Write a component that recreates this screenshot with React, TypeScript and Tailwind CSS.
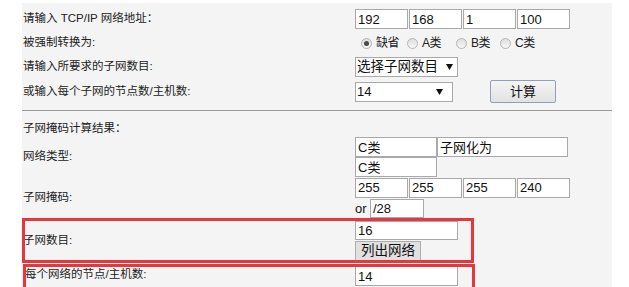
import type { ReactNode } from "react";

function Field({ value, w, h = "h-[20px]" }: { value: string; w: string; h?: string }) {
  return (
    <div
      className={`${w} ${h} shrink-0 border border-[#a9a9a9] bg-white px-[2px] text-[13px] leading-none text-[#111] flex items-center`}
    >
      {value}
    </div>
  );
}

function Arrow() {
  return (
    <svg width="7" height="6" viewBox="0 0 7 6" className="shrink-0">
      <path d="M0 0H7L3.5 6Z" fill="#111" />
    </svg>
  );
}

function Radio({ checked, label, w }: { checked?: boolean; label: string; w: string }) {
  return (
    <div className={`${w} flex items-center gap-[4px]`}>
      <span className="w-[11px] h-[11px] rounded-full border border-[#b4b4b4] bg-linear-to-b from-[#dedede] to-[#f7f7f7] flex items-center justify-center">
        {checked && <span className="w-[5px] h-[5px] rounded-full bg-[#4a4a4a]" />}
      </span>
      <span className="text-[12px] tracking-[-0.5px]">{label}</span>
    </div>
  );
}

function Row({ label, className, children }: { label: string; className: string; children?: ReactNode }) {
  return (
    <div className={`flex ${className}`}>
      <div className="w-[333px] shrink-0 pl-px flex items-center text-[11.5px] text-[#222]">
        {label}
      </div>
      <div className="flex flex-col justify-center">{children}</div>
    </div>
  );
}

const octets = ["192", "168", "1", "100"];
const mask = ["255", "255", "255", "240"];

export default function App() {
  return (
    <div className="min-h-[287px] bg-white pt-[3px] overflow-hidden font-['Liberation_Sans','Noto_Sans_CJK_SC',sans-serif] text-[#222]">
      <div className="ml-[22px] w-[590px] min-h-[284px] bg-[#f4f4f4] pt-[4px]">
        <Row label="请输入 TCP/IP 网络地址：" className="h-[24px]">
          <div className="flex gap-px">
            {octets.map((o, i) => (
              <Field key={i} value={o} w="w-[53px]" />
            ))}
          </div>
        </Row>
        <Row label="被强制转换为:" className="h-[24px]">
          <div className="flex items-center pl-[6px] text-[#222]">
            <Radio checked label="缺省" w="w-[46px]" />
            <Radio label="A类" w="w-[49px]" />
            <Radio label="B类" w="w-[44px]" />
            <Radio label="C类" w="w-[40px]" />
          </div>
        </Row>
        <Row label="请输入所要求的子网数目:" className="h-[24px]">
          <div className="w-[103px] h-[20px] border border-[#a9a9a9] bg-white flex items-center justify-between pl-px pr-[4px] text-[13.5px] text-[#111]">
            <span>选择子网数目</span>
            <Arrow />
          </div>
        </Row>
        <Row label="或输入每个子网的节点数/主机数:" className="h-[25px]">
          <div className="flex items-center">
            <div className="w-[98px] h-[20px] border border-[#a9a9a9] bg-white flex items-center justify-between pl-px pr-[9px] text-[13px] text-[#111]">
              <span>14</span>
              <Arrow />
            </div>
            <button className="ml-[37px] w-[66px] h-[23px] border border-[#8e9fb6] rounded-[2px] bg-linear-to-b from-[#f4f4f4] to-[#e2e2e2] text-[13px] text-[#111]">
              计算
            </button>
          </div>
        </Row>
        <div className="h-[6px]" />
        <div className="border-t border-[#9a9a9a]" />
        <div className="mt-[10px] h-[16px] pl-px text-[11.5px] leading-[15px]">子网掩码计算结果：</div>
        <Row label="网络类型:" className="h-[40px]">
          <div className="flex">
            <Field value="C类" w="w-[82px]" />
            <Field value="子网化为" w="w-[131px]" />
          </div>
          <Field value="C类" w="w-[82px]" />
        </Row>
        <Row label="子网掩码:" className="h-[41px] pt-px">
          <div className="flex gap-px">
            {mask.map((m, i) => (
              <Field key={i} value={m} w="w-[53px]" />
            ))}
          </div>
          <div className="flex items-center mt-px">
            <span className="text-[13px] text-[#111] w-[15px]">or</span>
            <Field value="/28" w="w-[54px]" h="h-[19px]" />
          </div>
        </Row>
        <div className="relative">
          <Row label="子网数目:" className="h-[45px]">
            <Field value="16" w="w-[103px]" h="h-[19px]" />
            <button className="mt-px w-[66px] h-[20px] border border-[#adadad] bg-[#e1e1e1] text-[13.5px] leading-none text-[#111]">
              列出网络
            </button>
          </Row>
          <div className="absolute left-0 top-0 w-[452px] h-[45px] border-[3px] border-[#e8363c] pointer-events-none" />
        </div>
        <div className="relative">
          <Row label="" className="h-[24px] pt-[2px]">
            <Field value="14" w="w-[103px]" />
          </Row>
          <div className="absolute left-px top-[2px] pl-[2px] h-[20px] flex items-center text-[11.5px]">每个网络的节点/主机数:</div>
          <div className="absolute left-px top-px w-[452px] h-[30px] border-[3px] border-[#e8363c] pointer-events-none" />
        </div>
      </div>
    </div>
  );
}
